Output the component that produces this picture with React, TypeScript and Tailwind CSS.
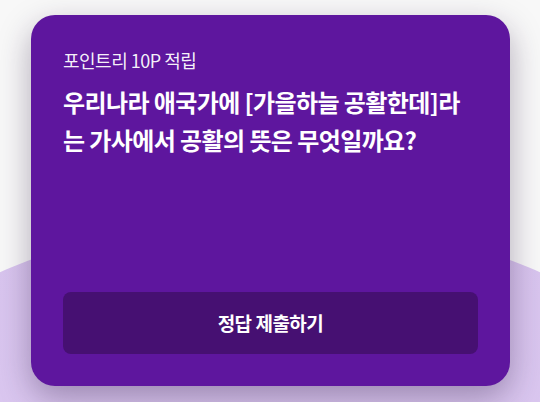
import React from 'react';

export default function App() {
  return (
    <div
      className="relative w-[540px] h-[402px] overflow-hidden bg-[#f8f8f8]"
      style={{ fontFamily: '"Noto Sans CJK KR", "Noto Sans", sans-serif' }}
    >
      {/* lavender backdrop */}
      <div className="absolute left-[-407px] top-[216px] w-[1354px] h-[1354px] rounded-full bg-gradient-to-b from-[#d8c4ee] to-[#e6d4f8]" />

      <div className="relative pt-[15px] pl-[31px]">
        <div className="w-[479px] h-[371px] rounded-[24px] bg-[#5e169e] shadow-[0_12px_32px_rgba(40,20,60,0.35)] px-[32px] pt-[33px] pb-[32px] flex flex-col">
          <p className="text-[18px] leading-[24px] text-white/95 tracking-[-0.5px]">포인트리 10P 적립</p>
          <h1 className="mt-[11px] text-[24px] leading-[38px] font-bold text-white tracking-[-0.6px]">
            우리나라 애국가에 [가을하늘 공활한데]라는 가사에서 공활의 뜻은 무엇일까요?
          </h1>
          <button className="mt-auto h-[62px] w-full rounded-[8px] bg-[#461072] text-white text-[19px] font-bold tracking-[-0.5px]">
            정답 제출하기
          </button>
        </div>
      </div>
    </div>
  );
}
